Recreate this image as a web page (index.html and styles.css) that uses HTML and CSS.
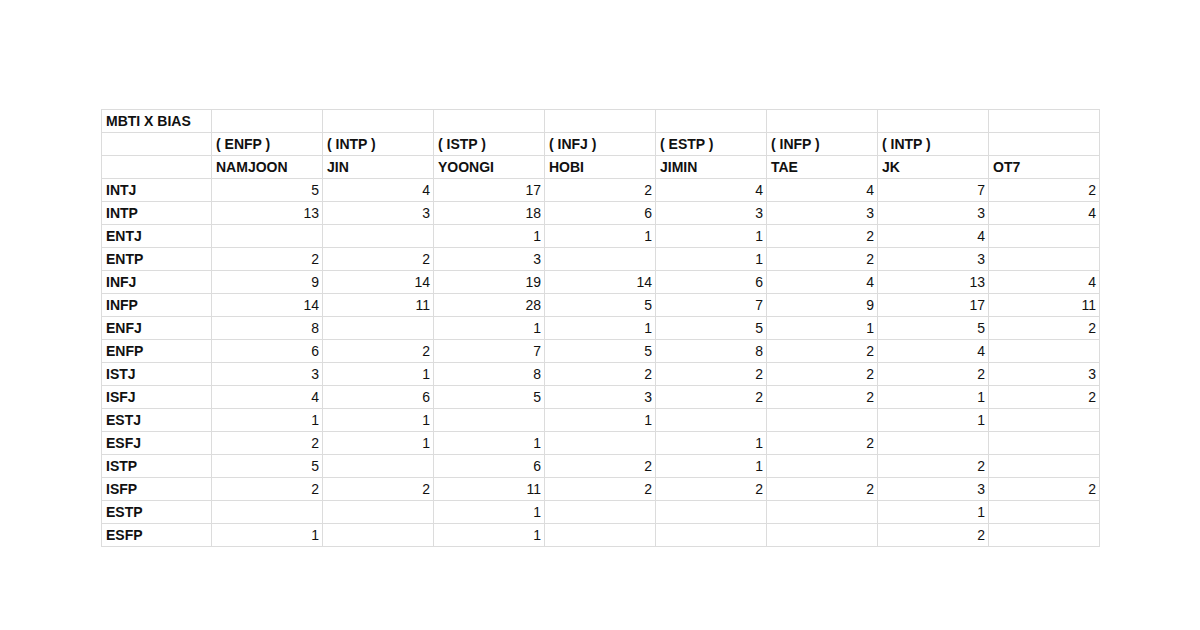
FILE: index.html
```html
<!DOCTYPE html>
<html>
<head>
<meta charset="utf-8">
<link rel="stylesheet" href="styles.css">
</head>
<body>
<div class="sheet" id="sheet">
  <div class="c b">MBTI X BIAS</div><div class="c"></div><div class="c"></div><div class="c"></div><div class="c"></div><div class="c"></div><div class="c"></div><div class="c"></div><div class="c"></div>
  <div class="c"></div><div class="c b">( ENFP )</div><div class="c b">( INTP )</div><div class="c b">( ISTP )</div><div class="c b">( INFJ )</div><div class="c b">( ESTP )</div><div class="c b">( INFP )</div><div class="c b">( INTP )</div><div class="c"></div>
  <div class="c"></div><div class="c b">NAMJOON</div><div class="c b">JIN</div><div class="c b">YOONGI</div><div class="c b">HOBI</div><div class="c b">JIMIN</div><div class="c b">TAE</div><div class="c b">JK</div><div class="c b">OT7</div>
</div>
<script src="app.js"></script>
</body>
</html>
```
FILE: app.js
```js
var data = [
  ["INTJ", 5, 4, 17, 2, 4, 4, 7, 2],
  ["INTP", 13, 3, 18, 6, 3, 3, 3, 4],
  ["ENTJ", "", "", 1, 1, 1, 2, 4, ""],
  ["ENTP", 2, 2, 3, "", 1, 2, 3, ""],
  ["INFJ", 9, 14, 19, 14, 6, 4, 13, 4],
  ["INFP", 14, 11, 28, 5, 7, 9, 17, 11],
  ["ENFJ", 8, "", 1, 1, 5, 1, 5, 2],
  ["ENFP", 6, 2, 7, 5, 8, 2, 4, ""],
  ["ISTJ", 3, 1, 8, 2, 2, 2, 2, 3],
  ["ISFJ", 4, 6, 5, 3, 2, 2, 1, 2],
  ["ESTJ", 1, 1, "", 1, "", "", 1, ""],
  ["ESFJ", 2, 1, 1, "", 1, 2, "", ""],
  ["ISTP", 5, "", 6, 2, 1, "", 2, ""],
  ["ISFP", 2, 2, 11, 2, 2, 2, 3, 2],
  ["ESTP", "", "", 1, "", "", "", 1, ""],
  ["ESFP", 1, "", 1, "", "", "", 2, ""]
];
var sheet = document.getElementById("sheet");
data.forEach(function (row) {
  row.forEach(function (v, i) {
    var d = document.createElement("div");
    d.className = i === 0 ? "c b" : "c n";
    d.textContent = v;
    sheet.appendChild(d);
  });
});
```
FILE: styles.css
```css
html, body {
  margin: 0;
  padding: 0;
  background: #ffffff;
}
body {
  padding: 109px 0 0 101px;
  font-family: "Liberation Sans", Arial, sans-serif;
  color: #111111;
}
.sheet {
  display: grid;
  grid-template-columns: 110px repeat(8, 111px);
  grid-auto-rows: 23px;
  width: 999px;
  box-sizing: border-box;
  border-top: 1px solid #dcdcdc;
  border-left: 1px solid #dcdcdc;
}
.c {
  box-sizing: border-box;
  border-right: 1px solid #dcdcdc;
  border-bottom: 1px solid #dcdcdc;
  font-size: 14px;
  line-height: 22px;
  padding: 0 3px 0 4px;
  white-space: nowrap;
  overflow: hidden;
}
.b {
  font-weight: bold;
}
.n {
  text-align: right;
}
```
